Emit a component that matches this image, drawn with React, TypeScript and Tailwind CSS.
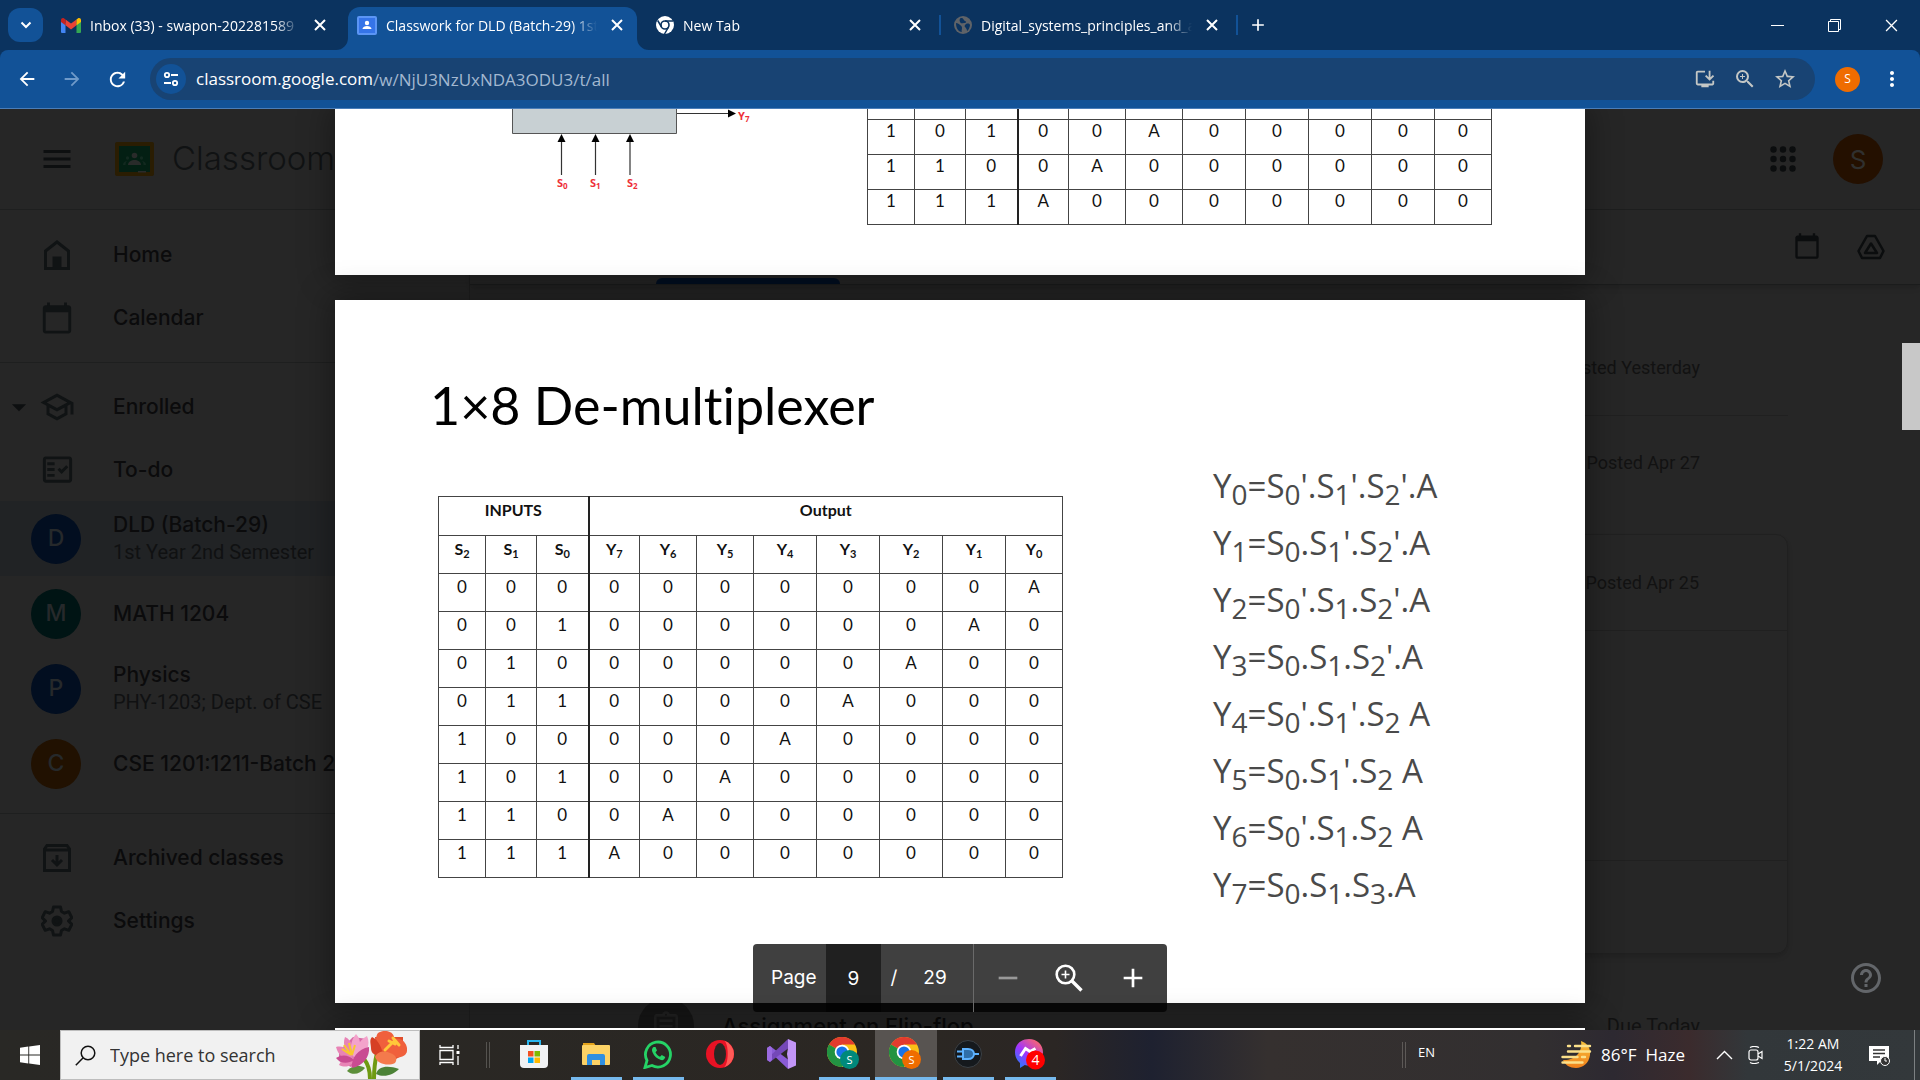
import React from "react";
import {
  MdAdd,
  MdArrowBack,
  MdArrowDropDown,
  MdArrowForward,
  MdCalendarToday,
  MdHelpOutline,
  MdInstallDesktop,
  MdMenu,
  MdMoreVert,
  MdOutlineAssignment,
  MdOutlineFactCheck,
  MdOutlineSchool,
  MdRefresh,
  MdRemove,
  MdStarBorder,
  MdZoomIn,
} from "react-icons/md";

/* ---------- small drawings ---------- */

const CloseIcon = ({ size = 12, w = 2 }: { size?: number; w?: number }) => (
  <svg width={size} height={size} viewBox="0 0 12 12" fill="none" stroke="currentColor" strokeWidth={w}>
    <path d="M1 1l10 10M11 1L1 11" />
  </svg>
);

const GmailIcon = () => (
  <svg width="20" height="15" viewBox="0 0 20 15">
    <path d="M0 2v12a1 1 0 0 0 1 1h3.500V5z" fill="#4285f4" />
    <path d="M20 2v12a1 1 0 0 1-1 1h-3.500V5z" fill="#34a853" />
    <path d="M4.500 1.500v5.800L10 11.400l5.500-4.100V1.500L10 5.600z" fill="#ea4335" />
    <path d="M0 2v2l4.500 3.300V1.500L3.200.5C1.800-.5 0 .4 0 2z" fill="#c5221f" />
    <path d="M20 2v2l-4.500 3.300V1.500l1.300-1C18.200-.5 20 .4 20 2z" fill="#fbbc04" />
  </svg>
);

const ClassroomTabIcon = () => (
  <svg width="20" height="19" viewBox="0 0 20 19">
    <rect width="20" height="19" rx="2" fill="#5b95f5" />
    <rect x="2" y="2" width="16" height="15" fill="#3574e8" />
    <circle cx="10" cy="7" r="2.200" fill="#fff" />
    <path d="M5.500 13c0-2 2.500-3 4.500-3s4.500 1 4.500 3z" fill="#fff" />
  </svg>
);

const ChromeMono = () => (
  <svg width="18" height="18" viewBox="0 0 18 18" fill="none">
    <circle cx="9" cy="9" r="9" fill="#fff" />
    <circle cx="9" cy="9" r="4" fill="#fff" stroke="#0b335f" strokeWidth="1.600" />
    <path d="M9 5h8M5.500 11L1.700 4.500M12.500 11l-4 7" stroke="#0b335f" strokeWidth="1.500" />
  </svg>
);

const GlobeIcon = () => (
  <svg width="18" height="18" viewBox="0 0 18 18">
    <circle cx="9" cy="9" r="9" fill="#5f6368" />
    <path
      d="M2 7c2 0 3 1 4 2s2 1 2 3-1 3 0 4c-3 0-6-3-6-9zM7 2c3 0 2 2 4 3s1 2-1 2-3 1-4-1 0-4 1-4zM12 8c2-1 4 0 4 1s-1 5-3 6c0-2-1-3-2-4s0-2 1-3z"
      fill="#0b335f"
    />
  </svg>
);

const TuneIcon = () => (
  <svg width="16" height="16" viewBox="0 0 16 16" fill="none" stroke="#fff" strokeWidth="1.800">
    <circle cx="4" cy="4" r="2.200" />
    <path d="M8 4h7M1 12h7" />
    <circle cx="12" cy="12" r="2.200" />
  </svg>
);

const HomeIcon = () => (
  <svg width="26" height="30" viewBox="0 0 26 30" fill="none">
    <path d="M1.500 11L13 2l11.500 9v17.500h-23z" stroke="currentColor" strokeWidth="3" />
    <path d="M8.500 16.500h9V28h-9z" fill="currentColor" />
  </svg>
);

const AppsIcon = () => (
  <svg width="26" height="26" viewBox="0 0 26 26" fill="currentColor">
    {[3.5, 13, 22.5].map((y) => [3.5, 13, 22.5].map((x) => <circle key={x + "-" + y} cx={x} cy={y} r="3.200" />))}
  </svg>
);

const ArchiveIcon = () => (
  <svg width="28" height="28" viewBox="0 0 28 28" fill="none" stroke="currentColor" strokeWidth="3">
    <path d="M1.500 5L4 1.500h20L26.500 5v21.500h-25zM1.500 6h25" />
    <path d="M14 11v9M9 16l5 5 5-5" />
  </svg>
);

const GearIcon = () => (
  <svg width="32" height="32" viewBox="0 0 32 32" fill="none" stroke="currentColor" strokeWidth="3" strokeLinejoin="round">
    <path d="M12.500 2h7l1 4.500 3 1.700 4.300-1.500 3 6-3.300 3.300 3.300 3.300-3 6-4.300-1.500-3 1.700-1 4.500h-7l-1-4.500-3-1.700-4.300 1.500-3-6L4.500 16l-3.300-3.300 3-6 4.300 1.500 3-1.700z" />
    <circle cx="16" cy="16" r="4" fill="currentColor" />
  </svg>
);

const DriveIcon = () => (
  <svg width="28" height="26" viewBox="0 0 28 26" fill="none" stroke="currentColor" strokeWidth="2.500" strokeLinejoin="round">
    <path d="M10 2h8l8.500 15-3.500 7H5l-3.500-7z" />
    <path d="M14 9.500L20 19H8z" />
  </svg>
);

const ClassroomLogo = () => (
  <svg width="39" height="34" viewBox="0 0 39 34">
    <rect width="39" height="34" rx="2" fill="#2a1d02" />
    <rect x="4" y="4" width="31" height="26" fill="#031f13" />
    <circle cx="19.500" cy="13.500" r="2.800" fill="#292b2a" />
    <path d="M13 23c0-3.500 3.500-5 6.500-5s6.500 1.500 6.500 5z" fill="#292b2a" />
    <path d="M8 23c0-2 1-3.500 4-4-1 1-1.500 2-1.500 4zM31 23c0-2-1-3.500-4-4 1 1 1.500 2 1.500 4z" fill="#12291f" />
    <circle cx="12.500" cy="16" r="1.700" fill="#12291f" />
    <circle cx="26.500" cy="16" r="1.700" fill="#12291f" />
    <path d="M23 29h8v1.500h-8z" fill="#292b2a" />
  </svg>
);

const PdfZoomIcon = () => (
  <svg width="28" height="28" viewBox="0 0 28 28" fill="none" stroke="#fff">
    <circle cx="10.500" cy="10.500" r="8.800" strokeWidth="2.600" />
    <path d="M17 17l9.500 9.500" strokeWidth="3.400" />
    <path d="M10.500 6.500v8M6.500 10.500h8" strokeWidth="1.600" />
  </svg>
);

/* ---------- browser chrome ---------- */

type TabProps = { icon: React.ReactNode; title: string; className: string };

const TabBody = ({ icon, title, className }: TabProps) => (
  <div className={"flex h-full shrink-0 items-center " + className}>
    {icon}
    <span className="ml-[9px] flex-1 overflow-hidden whitespace-nowrap text-[14px] [mask-image:linear-gradient(to_right,black_88%,transparent)]">
      {title}
    </span>
    <button aria-label={"Close " + title} className="ml-2 grid size-6 shrink-0 place-items-center">
      <CloseIcon />
    </button>
  </div>
);

const TabStrip = () => (
  <div className="flex h-[50px] shrink-0 items-stretch bg-[#0b335f] text-white">
    <button aria-label="Search tabs" className="ml-2 mt-2 grid h-[34px] w-[35px] shrink-0 place-items-center rounded-xl bg-[#125297]">
      <svg width="12" height="8" viewBox="0 0 12 8" fill="none" stroke="#fff" strokeWidth="2">
        <path d="M1.500 1.500L6 6l4.500-4.500" />
      </svg>
    </button>
    <TabBody icon={<GmailIcon />} title="Inbox (33) - swapon-202281589" className="ml-[18px] w-[271px]" />
    <div className="ml-1 flex shrink-0 items-end">
      <svg width="12" height="12" viewBox="0 0 12 12">
        <path d="M12 0v12H0A12 12 0 0 0 12 0z" fill="#125297" />
      </svg>
      <div className="h-[43px] w-[289px] rounded-t-xl bg-[#125297] pb-[7px] pl-[9px] pr-2">
        <TabBody icon={<ClassroomTabIcon />} title="Classwork for DLD (Batch-29) 1st" className="w-full" />
      </div>
      <svg width="12" height="12" viewBox="0 0 12 12">
        <path d="M0 0v12h12A12 12 0 0 1 0 0z" fill="#125297" />
      </svg>
    </div>
    <TabBody icon={<ChromeMono />} title="New Tab" className="ml-[7px] w-[271px]" />
    <span className="ml-3 h-5 w-[2px] shrink-0 self-center bg-[#125297]" />
    <TabBody icon={<GlobeIcon />} title="Digital_systems_principles_and_a" className="ml-[13px] w-[270px]" />
    <span className="ml-3 h-5 w-[2px] shrink-0 self-center bg-[#125297]" />
    <button aria-label="New tab" className="ml-2 grid w-6 shrink-0 place-items-center">
      <MdAdd size={20} />
    </button>
    <div className="ml-auto flex">
      <button aria-label="Minimize" className="grid w-[57px] place-items-center">
        <span className="h-px w-[13px] bg-white" />
      </button>
      <button aria-label="Restore" className="grid w-[57px] place-items-center">
        <svg width="13" height="13" viewBox="0 0 13 13" fill="none" stroke="#fff">
          <path d="M.5 2.500h10v10H.5zM2.500 2.500v-2h10v10h-2" />
        </svg>
      </button>
      <button aria-label="Close window" className="grid w-[57px] place-items-center">
        <CloseIcon size={13} w={1.2} />
      </button>
    </div>
  </div>
);

const Toolbar = () => (
  <div className="shrink-0 bg-[#0b335f]">
    <div className="flex h-[59px] items-center rounded-t-lg border-b border-[#4a7db8] bg-[#125297] pl-[15px] pr-4 text-white">
      <button aria-label="Back" className="grid w-6 place-items-center">
        <MdArrowBack size={22} />
      </button>
      <button aria-label="Forward" className="ml-[21px] grid w-6 place-items-center text-[#6f9ac9]">
        <MdArrowForward size={22} />
      </button>
      <button aria-label="Reload" className="ml-[21px] grid w-6 place-items-center">
        <MdRefresh size={23} />
      </button>
      <div className="ml-[21px] flex h-[42px] flex-1 items-center rounded-full bg-[#184373] pl-[6px] pr-[10px] text-[#c4c7c5]">
        <button aria-label="Site information" className="grid size-[30px] place-items-center rounded-full bg-[#125297]">
          <TuneIcon />
        </button>
        <div className="relative ml-[10px] h-full flex-1 text-[17px] leading-[42px]">
          <input
            aria-label="Address"
            defaultValue="classroom.google.com/w/NjU3NzUxNDA3ODU3/t/all"
            className="h-full w-full bg-transparent text-[#a3b8d0] outline-none"
          />
          <span className="pointer-events-none absolute left-0 top-0 bg-[#184373] text-white">classroom.google.com</span>
        </div>
        <button aria-label="Install app" className="grid w-10 place-items-center">
          <MdInstallDesktop size={22} />
        </button>
        <button aria-label="Zoom" className="grid w-10 place-items-center">
          <MdZoomIn size={24} />
        </button>
        <button aria-label="Bookmark" className="grid w-10 place-items-center">
          <MdStarBorder size={24} />
        </button>
      </div>
      <button aria-label="Profile" className="ml-5 grid size-[25px] place-items-center rounded-full bg-[#ef6c00] text-[12px]">
        S
      </button>
      <button aria-label="Menu" className="ml-5 grid w-6 place-items-center">
        <MdMoreVert size={24} />
      </button>
    </div>
  </div>
);

/* ---------- dimmed classroom page ---------- */

const NavRow = ({ icon, label, caret }: { icon: React.ReactNode; label: string; caret?: boolean }) => (
  <a href="#" className="flex h-[63px] items-center">
    <span className="flex w-[38px] shrink-0 justify-center text-[#0d0f10]">{caret && <MdArrowDropDown size={34} />}</span>
    <span className="grid w-[38px] shrink-0 place-items-center text-[#101314]">{icon}</span>
    <span className="ml-[37px] text-[21px] font-medium">{label}</span>
  </a>
);

type Klass = { letter: string; color: string; title: string; sub?: string; active?: boolean };

const CLASSES: Klass[] = [
  { letter: "D", color: "bg-[#020e20]", title: "DLD (Batch-29)", sub: "1st Year 2nd Semester", active: true },
  { letter: "M", color: "bg-[#001414]", title: "MATH 1204" },
  { letter: "P", color: "bg-[#020e20]", title: "Physics", sub: "PHY-1203; Dept. of CSE" },
  { letter: "C", color: "bg-[#211101]", title: "CSE 1201:1211-Batch 29" },
];

const Sidebar = () => (
  <nav className="w-[470px] shrink-0 border-r border-[#202020] font-['Inter',sans-serif] text-[#0b0b0c]">
    <div className="py-[13px]">
      <NavRow icon={<HomeIcon />} label="Home" />
      <NavRow icon={<MdCalendarToday size={34} />} label="Calendar" />
    </div>
    <div className="border-y border-[#1e1f1f] py-3">
      <NavRow icon={<MdOutlineSchool size={36} />} label="Enrolled" caret />
      <NavRow icon={<MdOutlineFactCheck size={35} />} label="To-do" />
      {CLASSES.map((c) => (
        <a key={c.title} href="#" className={"flex h-[75px] items-center pl-[31px] " + (c.active ? "bg-[#212325]" : "")}>
          <span className={"grid size-[50px] shrink-0 place-items-center rounded-full text-[23px] font-medium text-[#26292b] " + c.color}>
            {c.letter}
          </span>
          <span className="ml-8 whitespace-nowrap">
            <span className="block text-[21px] font-medium leading-7">{c.title}</span>
            {c.sub && <span className="block font-['Roboto',sans-serif] text-[20px] leading-[27px] text-[#101112]">{c.sub}</span>}
          </span>
        </a>
      ))}
    </div>
    <div className="py-3">
      <NavRow icon={<ArchiveIcon />} label="Archived classes" />
      <NavRow icon={<GearIcon />} label="Settings" />
    </div>
  </nav>
);

const Posted = ({ text, className }: { text: string; className: string }) => (
  <div className={"flex items-center justify-end pr-[88px] " + className}>{text}</div>
);

const ClassroomPage = () => (
  <div className="flex h-full flex-col bg-[#262626]">
    <header className="flex h-[101px] shrink-0 items-center border-b border-[#1e1f1f] pl-[39px] pr-[37px]">
      <button aria-label="Main menu" className="text-[#0d0f10]">
        <MdMenu size={36} />
      </button>
      <span className="ml-10">
        <ClassroomLogo />
      </span>
      <span className="ml-[18px] font-['Inter',sans-serif] text-[33px] font-light text-[#101213]">Classroom</span>
      <button aria-label="Apps" className="ml-auto text-[#0b0d0e]">
        <AppsIcon />
      </button>
      <button aria-label="Account" className="ml-[37px] grid size-[50px] place-items-center rounded-full bg-[#241000] font-['Inter',sans-serif] text-[26px] text-[#30302f]">
        S
      </button>
    </header>
    <div className="flex min-h-0 flex-1">
      <Sidebar />
      <main className="min-w-0 flex-1 font-['Roboto',sans-serif] text-[18px] text-[#121212]">
        <div className="flex h-[75px] items-end justify-end border-b border-[#1b1c1c] pr-[35px] shadow-md">
          <div className="mr-auto ml-[186px] h-[6px] w-[184px] rounded-t-md bg-[#020f22]" />
          <button aria-label="Class calendar" className="mb-6 text-[#0b0d0e]">
            <MdCalendarToday size={28} />
          </button>
          <button aria-label="Class Drive folder" className="mb-6 ml-9 text-[#0b0d0e]">
            <DriveIcon />
          </button>
        </div>
        <div className="ml-[132px] mr-[132px]">
          <Posted text="Posted Yesterday" className="mt-[35px] h-24 border-b border-[#202020]" />
          <Posted text="Posted Apr 27" className="h-[92px]" />
          <div className="mt-[26px] h-[420px] rounded-xl border border-[#202020] shadow-md">
            <Posted text="Posted Apr 25" className="h-24 border-b border-[#202020]" />
            <div className="h-[230px] border-b border-[#202020]" />
          </div>
          <div className="mt-[44px] flex items-center pl-9 pr-[88px]">
            <span className="grid size-[56px] place-items-center rounded-full bg-[#171717] text-[#232323]">
              <MdOutlineAssignment size={32} />
            </span>
            <span className="ml-7 whitespace-nowrap font-['Inter',sans-serif] text-[22px] font-medium leading-[48px] text-[#0a0a0a]">
              Assignment on Flip-flop
            </span>
            <span className="ml-auto text-[20px]">Due Today</span>
          </div>
        </div>
      </main>
    </div>
  </div>
);

/* ---------- document viewer ---------- */

const COLS = [
  "w-[47px]", "w-[51px]", "w-[52px]", "w-[51px]", "w-[57px]", "w-[57px]",
  "w-[63px]", "w-[63px]", "w-[63px]", "w-[63px]", "w-[57px]",
];

const truthRow = (n: number): string[] => {
  const bits = [(n >> 2) & 1, (n >> 1) & 1, n & 1].map(String);
  const outs = Array.from({ length: 8 }, (_, i) => (7 - i === n ? "A" : "0"));
  return [...bits, ...outs];
};

const HEADS: [string, number][] = [
  ["S", 2], ["S", 1], ["S", 0], ["Y", 7], ["Y", 6], ["Y", 5], ["Y", 4], ["Y", 3], ["Y", 2], ["Y", 1], ["Y", 0],
];

const CELL = "border border-[#444] p-0 align-top";

const TableCols = () => (
  <colgroup>
    {COLS.map((w, i) => (
      <col key={i} className={w} />
    ))}
  </colgroup>
);

const TruthRow = ({ n, height }: { n: number; height: string }) => (
  <tr className={height}>
    {truthRow(n).map((v, i) => (
      <td key={i} className={CELL + (i === 3 ? " border-l-2 border-l-[#222]" : "")}>
        {v}
      </td>
    ))}
  </tr>
);

const TABLE = "w-[625px] table-fixed border-collapse text-center font-['Lato',sans-serif] text-[17px] text-[#111]";

const TruthTable = () => (
  <table className={TABLE + " leading-[26px]"}>
    <TableCols />
    <thead className="text-[16px]">
      <tr className="h-[39px]">
        <th colSpan={3} className={CELL}>INPUTS</th>
        <th colSpan={8} className={CELL + " border-l-2 border-l-[#222]"}>Output</th>
      </tr>
      <tr className="h-[38px]">
        {HEADS.map(([l, s], i) => (
          <th key={i} className={CELL + (i === 3 ? " border-l-2 border-l-[#222]" : "")}>
            {l}
            <sub className="text-[11px]">{s}</sub>
          </th>
        ))}
      </tr>
    </thead>
    <tbody>
      {[0, 1, 2, 3, 4, 5, 6, 7].map((n) => (
        <TruthRow key={n} n={n} height="h-[38px]" />
      ))}
    </tbody>
  </table>
);

const UpperTable = () => (
  <table className={TABLE + " leading-[22px]"}>
    <TableCols />
    <tbody>
      <tr className="h-[10px]">
        {COLS.map((_, i) => (
          <td key={i} className={CELL + " border-t-0" + (i === 3 ? " border-l-2 border-l-[#222]" : "")} />
        ))}
      </tr>
      {[5, 6, 7].map((n) => (
        <TruthRow key={n} n={n} height="h-[35px]" />
      ))}
    </tbody>
  </table>
);

const BlockDiagram = () => (
  <svg width="244" height="84" viewBox="0 0 244 84" className="shrink-0 font-['Open_Sans',sans-serif] font-bold">
    <path d="M.5 0v24.500h164V0" fill="#c8d0d3" stroke="#555" />
    <path d="M165 4.500h52M49.500 33v33M83.500 33v33M118 33v33" stroke="#333" strokeWidth="1.200" />
    <path d="M216 .5l8 4-8 4zM45.500 33l4-8 4 8zM79.500 33l4-8 4 8zM114 33l4-8 4 8z" fill="#000" />
    <g fill="#ee3038" fontSize="11">
      <text x="226" y="11">Y<tspan fontSize="8" dy="2">7</tspan></text>
      <text x="45" y="78">S<tspan fontSize="8" dy="2">0</tspan></text>
      <text x="78" y="78">S<tspan fontSize="8" dy="2">1</tspan></text>
      <text x="115" y="78">S<tspan fontSize="8" dy="2">2</tspan></text>
    </g>
  </svg>
);

const EQUATIONS = [
  "Y0=S0'.S1'.S2'.A",
  "Y1=S0.S1'.S2'.A",
  "Y2=S0'.S1.S2'.A",
  "Y3=S0.S1.S2'.A",
  "Y4=S0'.S1'.S2 A",
  "Y5=S0.S1'.S2 A",
  "Y6=S0'.S1.S2 A",
  "Y7=S0.S1.S3.A",
];

const Equation = ({ text }: { text: string }) => (
  <li className="h-[57px] whitespace-nowrap">
    {text.split("").map((ch, i) =>
      /\d/.test(ch) ? (
        <sub key={i} className="text-[28px]">{ch}</sub>
      ) : (
        <span key={i}>{ch}</span>
      ),
    )}
  </li>
);

const PAGE = "mx-auto w-full max-w-[1250px] shrink-0 bg-white shadow-[0_0_30px_4px_rgba(0,0,0,0.35)]";

const DocumentViewer = () => (
  <div className="absolute inset-0 flex flex-col gap-[25px] overflow-hidden">
    <section aria-label="Page 8" className={PAGE + " flex h-[166px] items-start pl-[177px]"}>
      <BlockDiagram />
      <div className="ml-[111px]">
        <UpperTable />
      </div>
    </section>
    <section aria-label="Page 9" className={PAGE + " h-[703px] pl-[95px] pt-[70px] text-black"}>
      <h1 className="font-['Lato',sans-serif] text-[52px] leading-[70px] [font-variant-ligatures:none]">1×8 De-multiplexer</h1>
      <div className="flex pl-2 pt-[30px]">
        <div className="mt-[26px]">
          <TruthTable />
        </div>
        <ul className="ml-[150px] font-['Open_Sans',sans-serif] text-[33px] leading-[32px] text-[#4a4a4a]">
          {EQUATIONS.map((e) => (
            <Equation key={e} text={e} />
          ))}
        </ul>
      </div>
    </section>
    <section aria-label="Page 10" className={PAGE + " h-[703px]"} />
  </div>
);

const PageControls = () => (
  <div className="absolute bottom-[18px] left-1/2 flex h-[68px] w-[414px] -translate-x-1/2 items-center rounded bg-black/75 font-['Inter',sans-serif] text-[19px] text-white">
    <label htmlFor="page" className="w-[73px] pl-[18px]">Page</label>
    <input id="page" defaultValue="9" className="h-full w-[55px] bg-black/50 text-center outline-none" />
    <span className="w-[26px] text-center">/</span>
    <span className="w-[66px] pr-[10px] text-center">29</span>
    <span className="h-full w-px bg-[#6a6a6a]" />
    <button aria-label="Zoom out" className="ml-[18px] grid w-[30px] place-items-center text-[#999]">
      <MdRemove size={32} />
    </button>
    <button aria-label="Fit to page" className="ml-[32px] grid w-[30px] place-items-center">
      <PdfZoomIcon />
    </button>
    <button aria-label="Zoom in" className="ml-[33px] grid w-[30px] place-items-center">
      <MdAdd size={32} />
    </button>
  </div>
);

/* ---------- taskbar ---------- */

const Flowers = () => (
  <svg width="72" height="48" viewBox="0 0 72 48">
    <path d="M29 28c5 6 6 12 6 20M42 22c-2 8-3 16-3 26" stroke="#6f9a12" strokeWidth="4" fill="none" />
    <path d="M12 40c6-7 14-6 18-3-5 6-12 8-18 3z" fill="#5d8f3a" />
    <path d="M41 43c2-8 12-9 23-5-6 6-15 9-23 5z" fill="#4c8237" />
    <path d="M4 20L18 6l14 2-2 20-14 8L4 30z" fill="#d868a6" />
    <g fill="#e884b6">
      <path d="M1 16c8-2 14 3 17 12C9 29 3 24 1 16zM4 34c3-7 9-9 16-7-2 7-8 11-16 7zM10 6c7 3 9 11 8 20C11 22 7 14 10 6z" />
    </g>
    <g fill="#f3a3cb">
      <path d="M21 3c6 6 5 15-2 24-4-9-4-17 2-24zM32 5c4 9 0 18-11 24-2-10 2-19 11-24z" />
    </g>
    <g fill="#c94b92">
      <path d="M1 27c6-4 13-3 18 2-6 4-13 4-18-2zM34 16c1 10-6 19-17 21-1-10 6-19 17-21z" />
    </g>
    <path d="M9 14l7 10M14 12l3 12M20 14l-3 10M7 18l9 6" stroke="#f7c92e" strokeWidth="2" />
    <path d="M40 6h28v18l-14 8-12-6z" fill="#e04e2c" />
    <g fill="#f0603c">
      <path d="M43 2c6-4 15-2 16 4s-6 12-11 14c-6-3-9-13-5-18z" />
      <path d="M60 8c7-2 13 5 12 12s-12 9-22 3c1-7 4-13 10-15z" />
    </g>
    <g fill="#d63f25">
      <path d="M37 6c5 2 9 8 11 17-7 3-12 0-12-6 0-4-2-8 1-11z" />
    </g>
    <path d="M40 26c2-5 9-7 15-4 6 2 8 6 5 10-6 3-17 2-20-6z" fill="#f47a4c" />
    <path d="M50 19l8-8M54 10l6 3M58 7l6 7" stroke="#ffc83a" strokeWidth="3" strokeLinecap="round" />
  </svg>
);

const StoreIcon = () => (
  <svg width="30" height="30" viewBox="0 0 30 30">
    <path d="M9 7V2h12v5" fill="none" stroke="#29b6f0" strokeWidth="2" />
    <path d="M1 6h28v19a4 4 0 0 1-4 4H5a4 4 0 0 1-4-4z" fill="#f1f2f4" />
    <path d="M9 12h5.500v5.500H9z" fill="#f25022" />
    <path d="M15.500 12H21v5.500h-5.500z" fill="#7fba00" />
    <path d="M9 18.500h5.500V24H9z" fill="#00a4ef" />
    <path d="M15.500 18.500H21V24h-5.500z" fill="#ffb900" />
  </svg>
);

const ExplorerIcon = () => (
  <svg width="28" height="24" viewBox="0 0 28 24">
    <path d="M1 1h11l2 3H1z" fill="#e3a21a" />
    <rect y="3" width="28" height="20" rx="1" fill="#fcd265" />
    <path d="M5 23v-9a2 2 0 0 1 2-2h14a2 2 0 0 1 2 2v9h-5v-5h-8v5z" fill="#2f8fe0" />
  </svg>
);

const WhatsappIcon = () => (
  <svg width="30" height="30" viewBox="0 0 30 30">
    <path d="M2 28.500l2-7A12.500 12.500 0 1 1 9 26.500z" fill="none" stroke="#25d366" strokeWidth="2.800" />
    <path d="M10.500 8c-1.500 1-2 3-1 5.300 1.700 4 4.500 6.500 8.500 7.700 2 .5 3.700-.5 4.300-3l-3.500-2-1.800 1.800c-2-1-3.500-2.500-4.500-4.500L14 11.500 12.500 8z" fill="#25d366" />
  </svg>
);

const OperaIcon = () => (
  <svg width="28" height="28" viewBox="0 0 28 28">
    <circle cx="14" cy="14" r="14" fill="#e81224" />
    <path d="M18 .6A14 14 0 0 1 18 27.400c5-3 5-24 0-26.800z" fill="#ff5a57" />
    <ellipse cx="14" cy="14" rx="6" ry="11" fill="#2b2724" />
  </svg>
);

const VisualStudioIcon = () => (
  <svg width="30" height="30" viewBox="0 0 30 30">
    <path d="M0 9l3-2 20 15-2 8L0 10z" fill="#8a5bd6" />
    <path d="M0 21l3 2L23 8l-2-8L0 20z" fill="#7448b8" />
    <path d="M0 9l3-2 2 2v12l-2 2-3-2z" fill="#9b6be0" />
    <path d="M21 0l8 3.500v23L21 30V21l-1-6 1-6z" fill="#c295f7" />
  </svg>
);

const ChromeIcon = ({ badge }: { badge: string }) => (
  <svg width="34" height="34" viewBox="0 0 34 34">
    <circle cx="15" cy="15" r="15" fill="#fbc116" />
    <path d="M15 15L2 7.500A15 15 0 0 1 28 7.500H15z" fill="#e33b2e" />
    <path d="M15 15L2 7.500A15 15 0 0 0 15 30l6.500-11.200z" fill="#229342" />
    <circle cx="15" cy="15" r="7.300" fill="#fff" />
    <circle cx="15" cy="15" r="5.600" fill="#1a73e8" />
    <circle cx="22.500" cy="22.500" r="9.500" fill={badge} />
    <text x="22.500" y="26.500" fontSize="11" fill="#fff" textAnchor="middle">S</text>
  </svg>
);

const LogicIcon = () => (
  <svg width="28" height="28" viewBox="0 0 28 28" fill="none">
    <circle cx="14" cy="14" r="13.500" fill="#15191d" stroke="#3b4045" />
    <path d="M9 9h5c4 0 6 2.500 6 5s-2 5-6 5H9z" fill="#2f6ea8" />
    <path d="M9 9h5c4 0 6 2.500 6 5s-2 5-6 5H9zM3 11.500h6M3 16.500h6M20 14h5" stroke="#5db2ff" strokeWidth="2" />
  </svg>
);

const MessengerIcon = () => (
  <svg width="32" height="32" viewBox="0 0 32 32">
    <defs>
      <linearGradient id="msgr" x1="0" y1="1" x2="0.800" y2="0">
        <stop offset="0" stopColor="#0a8cff" />
        <stop offset="0.500" stopColor="#a033ff" />
        <stop offset="1" stopColor="#ff6968" />
      </linearGradient>
    </defs>
    <path d="M15 1c8 0 14 5.500 14 13.200S23 27.500 15 27.500c-1.500 0-3-.2-4.200-.6L6 30v-5c-3-2.500-5-6.300-5-10.800C1 6.500 7 1 15 1z" fill="url(#msgr)" />
    <path d="M6.500 18l5-7.500 4.500 3 5.500-3" fill="none" stroke="#fff" strokeWidth="3" />
    <circle cx="21.500" cy="22" r="9.500" fill="#f00" />
    <text x="21.500" y="27" fontSize="14" fill="#fff" textAnchor="middle">4</text>
  </svg>
);

const APPS: { name: string; icon: React.ReactNode; open?: boolean; active?: boolean }[] = [
  { name: "Microsoft Store", icon: <StoreIcon /> },
  { name: "File Explorer", icon: <ExplorerIcon />, open: true },
  { name: "WhatsApp", icon: <WhatsappIcon />, open: true },
  { name: "Opera", icon: <OperaIcon /> },
  { name: "Visual Studio", icon: <VisualStudioIcon /> },
  { name: "Chrome, first profile", icon: <ChromeIcon badge="#00897b" />, open: true },
  { name: "Chrome, second profile", icon: <ChromeIcon badge="#ef6c00" />, open: true, active: true },
  { name: "Logic simulator", icon: <LogicIcon />, open: true },
  { name: "Messenger", icon: <MessengerIcon />, open: true },
];

const HazeIcon = () => (
  <svg width="31" height="28" viewBox="0 0 31 28">
    <defs>
      <linearGradient id="haze" x1="0" y1="0" x2="0" y2="1">
        <stop offset="0" stopColor="#f8c13a" />
        <stop offset="1" stopColor="#f0801c" />
      </linearGradient>
    </defs>
    <path d="M20 0c6 2 10 7 9 14-1 8-7 13-14 13-6 0-11-3-13-8 10 1 20-6 18-19z" fill="url(#haze)" />
    <path d="M7 5h2M14 5h15M7 10.500h22M1.500 16h15M21 16h3M1.500 21.500h20" stroke="#fbe08a" strokeWidth="2.400" strokeLinecap="round" />
  </svg>
);

const Taskbar = () => (
  <footer className="flex h-[50px] shrink-0 items-stretch bg-[linear-gradient(to_right,#292825_0%,#2b2723_48%,#2b2624_55%,#1e2130_60%,#35302f_66%,#322f30_80%,#2d2931_84%,#3b2b2d_88%,#32373a_91%,#33383b_100%)] text-white">
    <button aria-label="Start" className="grid w-[60px] place-items-center">
      <svg width="20" height="20" viewBox="0 0 20 20" fill="#fff">
        <path d="M0 2.800l8.300-1.200v7.900H0zM9.200 1.400L20 0v9.500H9.200zM0 10.500h8.300v7.900L0 17.200zM9.200 10.500H20V20L9.200 18.600z" />
      </svg>
    </button>
    <div className="flex w-[360px] items-center border border-[#bdbdbd] bg-[#f1f1f1] pl-[14px] pr-[12px]">
      <svg width="21" height="21" viewBox="0 0 21 21" fill="none" stroke="#111" strokeWidth="1.500">
        <circle cx="13" cy="8" r="6.800" />
        <path d="M8.200 12.800L.8 20.200" />
      </svg>
      <input
        aria-label="Search"
        placeholder="Type here to search"
        className="ml-[14px] min-w-0 flex-1 bg-transparent text-[18px] text-black outline-none placeholder:text-[#333]"
      />
      <Flowers />
    </div>
    <button aria-label="Task view" className="grid w-[60px] place-items-center">
      <svg width="22" height="20" viewBox="0 0 22 20" fill="none" stroke="#fff" strokeWidth="1.300">
        <path d="M1 5.500h13v9H1zM1 0v2.500h13V0M1 20v-2.500h13V20M19 0v4M19 11v9" />
        <path d="M17.500 6h3v3h-3z" fill="#fff" stroke="none" />
      </svg>
    </button>
    <span className="ml-[6px] mr-[13px] h-[26px] w-1 shrink-0 self-center border-x border-[#55534f]" />
    {APPS.map((a) => (
      <button
        key={a.name}
        aria-label={a.name}
        className={"flex w-[62px] flex-col items-center justify-between " + (a.active ? "bg-[#585451]" : "")}
      >
        <span className="grid flex-1 place-items-center">{a.icon}</span>
        <span className={"h-[3px] " + (a.active ? "w-full bg-[#76b9ed]" : a.open ? "w-[51px] bg-[#76b9ed]" : "w-0")} />
      </button>
    ))}
    <div className="ml-auto flex items-center pr-[5px]">
      <span className="h-[26px] w-1 border-x border-[#5d5957]" />
      <button className="ml-3 w-[26px] pb-1 text-left text-[13px]">EN</button>
      <button className="ml-[117px] flex items-center whitespace-nowrap text-[17px]">
        <HazeIcon />
        <span className="ml-[9px]">86°F</span>
        <span className="ml-[9px]">Haze</span>
      </button>
      <button aria-label="Hidden icons" className="ml-[31px]">
        <svg width="17" height="10" viewBox="0 0 17 10" fill="none" stroke="#fff" strokeWidth="1.400">
          <path d="M1 9l7.500-7.500L16 9" />
        </svg>
      </button>
      <button aria-label="Meet now" className="ml-[15px]">
        <svg width="15" height="18" viewBox="0 0 15 18" fill="none" stroke="#fff" strokeWidth="1.200">
          <rect x="1" y="4" width="9" height="10" rx="2" />
          <path d="M10 8l4-2.500v7L10 10M2 1.500C4 .3 8 .3 11 1.500M2 16.500c2 1.200 6 1.200 9 0" />
        </svg>
      </button>
      <button className="ml-[15px] w-[70px] text-center text-[14px] leading-[22px]">
        <span className="block">1:22 AM</span>
        <span className="block">5/1/2024</span>
      </button>
      <button aria-label="Notifications" className="ml-[21px] mr-[24px]">
        <svg width="21" height="21" viewBox="0 0 21 21">
          <path d="M0 1h20v15H12l-4 4v-4H0z" fill="#fff" />
          <path d="M4 5h12M4 8.500h12M4 12h7" stroke="#333" strokeWidth="1.300" />
          <circle cx="16" cy="16" r="4.500" fill="#333" stroke="#fff" />
          <path d="M16 13v3h2" stroke="#fff" fill="none" />
        </svg>
      </button>
      <span className="h-[50px] w-px bg-[#7c8082]" />
    </div>
  </footer>
);

export default function App() {
  return (
    <div className="flex h-screen flex-col overflow-hidden bg-[#262626] font-['Open_Sans',sans-serif]">
      <TabStrip />
      <Toolbar />
      <div className="relative min-h-0 flex-1 overflow-hidden">
        <ClassroomPage />
        <DocumentViewer />
        <PageControls />
        <button aria-label="Help" className="absolute bottom-[34px] right-[36px] text-[#63666a]">
          <MdHelpOutline size={36} />
        </button>
        <div className="absolute right-0 top-[234px] h-[87px] w-[18px] bg-[#c8c8c8]" />
      </div>
      <Taskbar />
    </div>
  );
}
